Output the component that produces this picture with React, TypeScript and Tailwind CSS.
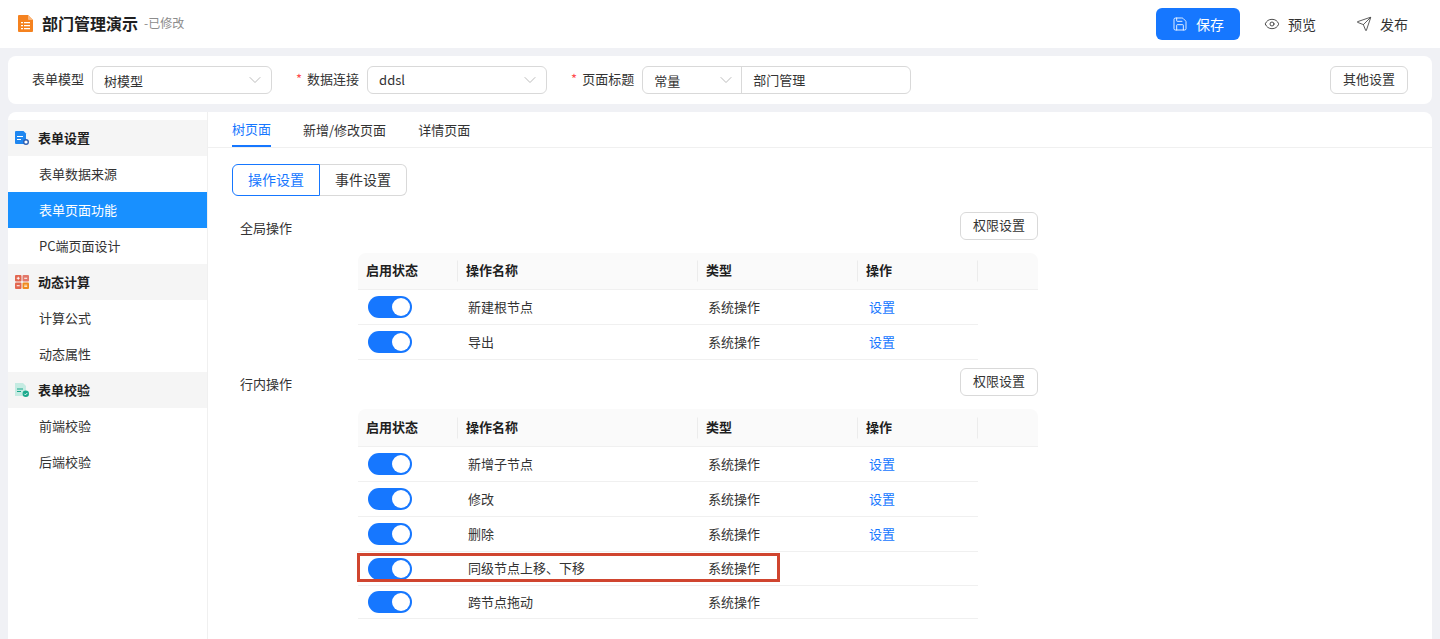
import { ChevronDown, Eye, Save, Send } from "lucide-react";

const FONT = "[font-family:'Noto_Sans_CJK_SC','Noto_Sans',sans-serif]";

function FileIcon() {
  return (
    <svg width="15" height="17" viewBox="0 0 15 17" className="mb-px shrink-0">
      <path d="M1 0h9l5 5v11a1 1 0 0 1-1 1H1a1 1 0 0 1-1-1V1a1 1 0 0 1 1-1z" fill="#f5821f" />
      <path d="M10 0l5 5h-4a1 1 0 0 1-1-1z" fill="#fbb77c" />
      <path d="M3 7h2v1.3H3zM6 7h6v1.3H6zM3 10h2v1.3H3zM6 10h6v1.3H6zM3 13h2v1.3H3zM6 13h6v1.3H6z" fill="#fff" />
    </svg>
  );
}

function FormIcon() {
  return (
    <svg width="14" height="14" viewBox="0 0 14 14" className="shrink-0">
      <path d="M1 0h7.5L11 2.5V13H1a1 1 0 0 1-1-1V1a1 1 0 0 1 1-1z" fill="#1f87f0" />
      <path d="M2 5h6v1H2zM2 8h4v1H2z" fill="#fff" />
      <circle cx="11" cy="11" r="2.3" fill="#fff" stroke="#2f5fb0" strokeWidth="1.4" />
    </svg>
  );
}

function CalcIcon() {
  return (
    <svg width="14" height="14" viewBox="0 0 14 14" className="shrink-0">
      <rect width="6.5" height="6.5" rx="1" fill="#e2664f" />
      <rect x="7.5" width="6.5" height="6.5" rx="1" fill="#e2786a" />
      <rect y="7.5" width="6.5" height="6.5" rx="1" fill="#e2664f" />
      <rect x="7.5" y="7.5" width="6.5" height="6.5" rx="1" fill="#f08a1d" />
      <path d="M1.7 2.8h3v.9h-3zM2.8 1.7h.9v3h-.9zM9.2 2.8h3v.9h-3zM1.7 10.3h3v.9h-3zM9.2 9.8h3v.8h-3zM9.2 11.2h3v.8h-3z" fill="#fff" />
    </svg>
  );
}

function CheckIcon() {
  return (
    <svg width="14" height="14" viewBox="0 0 14 14" className="shrink-0">
      <path d="M0 0h8l3 3v10H0z" fill="#c5ebe2" />
      <path d="M2 5.5h6v1H2zM2 8h4v1H2z" fill="#1aa98c" />
      <circle cx="10.8" cy="10.8" r="3.2" fill="#1aa98c" />
      <path d="M9.3 10.8l1.1 1.1 2-2" fill="none" stroke="#fff" strokeWidth="0.9" />
    </svg>
  );
}

function Toggle() {
  return (
    <span className="flex h-[22px] w-[44px] items-center justify-end rounded-full bg-[#1677ff] pr-[2px]">
      <span className="size-[18px] rounded-full bg-white" />
    </span>
  );
}

function Chevron() {
  return <ChevronDown size={20} strokeWidth={1.1} className="text-[#b5b5b5]" />;
}

function Req() {
  return <span className="mr-[5px] text-[13px] text-[#ff4d4f]">*</span>;
}

function SideHead({ icon, label }: { icon: React.ReactNode; label: string }) {
  return (
    <div className="flex h-9 items-center gap-[9px] bg-[#f5f5f5] pl-[7px] text-[13px] font-bold text-[#1f1f1f]">
      {icon}
      <span className="pb-px">{label}</span>
    </div>
  );
}

function SideItem({ label, active }: { label: string; active?: boolean }) {
  return (
    <div className={`flex h-9 items-center pb-px pl-[31px] text-[13px] ${active ? "bg-[#1890ff] text-white" : "text-[#333]"}`}>
      {label}
    </div>
  );
}

function OutlineBtn({ label }: { label: string }) {
  return (
    <button className="h-7 w-[78px] rounded-md border border-[#d9d9d9] bg-white pb-[2px] text-[13px] text-[#333]">
      {label}
    </button>
  );
}

function HeadCell({ label, className }: { label: string; className: string }) {
  return (
    <div className={`relative flex h-full items-center pb-[2px] text-[13px] font-bold text-[#1f1f1f] ${className}`}>
      {label}
      <span className="absolute right-0 top-1/2 h-[21px] w-px -translate-y-1/2 bg-[#ececec]" />
    </div>
  );
}

type RowData = { name: string; link?: boolean; marked?: boolean; h: string };

function Row({ name, link, marked, h }: RowData) {
  return (
    <div className={`relative flex w-[620px] items-center border-b border-[#f0f0f0] ${h}`}>
      <div className="w-[100px] pl-[10px]">
        <Toggle />
      </div>
      <div className="w-[240px] pb-px pl-[10px] text-[13px] text-[#333]">{name}</div>
      <div className="w-[160px] pb-px pl-[10px] text-[13px] text-[#333]">系统操作</div>
      <div className="w-[120px] pb-px pl-[11px] text-[13px] text-[#1677ff]">{link ? "设置" : ""}</div>
      {marked && <div className="absolute -left-px top-[1px] h-[29px] w-[423px] border-[3px] border-[#d0452f]" />}
    </div>
  );
}

function OpTable({ rows, headH }: { rows: RowData[]; headH: string }) {
  return (
    <div className="ml-[126px] w-[680px]">
      <div className={`flex items-center rounded-t-lg border-b border-[#f0f0f0] bg-[#fafafa] ${headH}`}>
        <HeadCell label="启用状态" className="w-[100px] pl-2" />
        <HeadCell label="操作名称" className="w-[240px] pl-2" />
        <HeadCell label="类型" className="w-[160px] pl-2" />
        <HeadCell label="操作" className="w-[120px] pl-2" />
      </div>
      {rows.map((r) => (
        <Row key={r.name} {...r} />
      ))}
    </div>
  );
}

function SectionHead({ label }: { label: string }) {
  return (
    <div className="flex w-[806px] items-center justify-between pl-2">
      <span className="pt-[4px] text-[13px] text-[#333]">{label}</span>
      <OutlineBtn label="权限设置" />
    </div>
  );
}

export default function App() {
  return (
    <div className={`flex h-[639px] flex-col overflow-hidden bg-[#f0f1f5] ${FONT}`}>
      <header className="flex h-12 shrink-0 items-center justify-between bg-white pl-[18px] pr-4">
        <div className="flex items-center">
          <FileIcon />
          <span className="ml-[9px] pb-[3px] text-base font-bold text-[#1f1f1f]">部门管理演示</span>
          <span className="ml-[6px] pb-[2px] text-xs text-[#8c8c8c]">-已修改</span>
        </div>
        <div className="flex items-center">
          <button className="flex h-8 w-[84px] items-center justify-center gap-2 rounded-md bg-[#1677ff] text-sm text-white">
            <Save size={16} strokeWidth={1.3} />
            保存
          </button>
          <button className="ml-[8px] flex h-8 w-[84px] items-center justify-center gap-2 text-sm text-[#333]">
            <Eye size={16} strokeWidth={1.3} />
            预览
          </button>
          <button className="ml-[8px] flex h-8 w-[84px] items-center justify-center gap-2 text-sm text-[#333]">
            <Send size={16} strokeWidth={1.2} />
            发布
          </button>
        </div>
      </header>

      <div className="mx-2 mt-2 flex h-12 shrink-0 items-center rounded-lg bg-white pl-6 pr-6 text-[13px] text-[#333]">
        <span className="pb-[2px]">表单模型</span>
        <div className="ml-2 flex h-7 w-[180px] items-center justify-between rounded-md border border-[#d9d9d9] pl-[11px] pr-[6px]">
          <span className="pt-px">树模型</span>
          <Chevron />
        </div>
        <span className="ml-6 pb-[2px]"><Req />数据连接</span>
        <div className="ml-2 flex h-7 w-[180px] items-center justify-between rounded-md border border-[#d9d9d9] pl-[11px] pr-[6px]">
          <span>ddsl</span>
          <Chevron />
        </div>
        <span className="ml-6 pb-[2px]"><Req />页面标题</span>
        <div className="ml-2 flex h-7 w-[269px] items-center rounded-md border border-[#d9d9d9]">
          <div className="flex h-full w-[99px] items-center justify-between border-r border-[#d9d9d9] pl-[11px] pr-[5px]">
            <span className="pt-px">常量</span>
            <Chevron />
          </div>
          <span className="pl-[11px]">部门管理</span>
        </div>
        <div className="ml-auto">
          <OutlineBtn label="其他设置" />
        </div>
      </div>

      <div className="mx-2 mt-2 flex min-h-0 flex-1 overflow-hidden rounded-t-lg bg-white">
        <aside className="w-[200px] shrink-0 border-r border-[#f0f0f0] pt-2">
          <SideHead icon={<FormIcon />} label="表单设置" />
          <SideItem label="表单数据来源" />
          <SideItem label="表单页面功能" active />
          <SideItem label="PC端页面设计" />
          <SideHead icon={<CalcIcon />} label="动态计算" />
          <SideItem label="计算公式" />
          <SideItem label="动态属性" />
          <SideHead icon={<CheckIcon />} label="表单校验" />
          <SideItem label="前端校验" />
          <SideItem label="后端校验" />
        </aside>

        <main className="min-w-0 flex-1">
          <div className="flex h-9 items-stretch gap-8 border-b border-[#f0f0f0] pl-6 text-[13px] text-[#333]">
            <span className="flex items-center border-b-2 border-[#1677ff] px-0 text-[#1677ff]">树页面</span>
            <span className="flex items-center">新增/修改页面</span>
            <span className="flex items-center">详情页面</span>
          </div>
          <div className="px-6 pt-4">
            <div className="flex text-sm">
              <span className="flex h-8 w-[88px] items-center justify-center rounded-l-md border border-[#1677ff] pb-[2px] text-[#1677ff]">操作设置</span>
              <span className="flex h-8 w-[87px] items-center justify-center rounded-r-md border border-l-0 border-[#d9d9d9] pb-[2px] text-[#333]">事件设置</span>
            </div>
            <div className="mt-4">
              <SectionHead label="全局操作" />
            </div>
            <div className="mt-[13px]">
              <OpTable
                headH="h-[37px]"
                rows={[
                  { name: "新建根节点", link: true, h: "h-[35px]" },
                  { name: "导出", link: true, h: "h-[35px]" },
                ]}
              />
            </div>
            <div className="mt-2">
              <SectionHead label="行内操作" />
            </div>
            <div className="mt-[13px]">
              <OpTable
                headH="h-[38px]"
                rows={[
                  { name: "新增子节点", link: true, h: "h-[35px]" },
                  { name: "修改", link: true, h: "h-[35px]" },
                  { name: "删除", link: true, h: "h-[35px]" },
                  { name: "同级节点上移、下移", marked: true, h: "h-[34px]" },
                  { name: "跨节点拖动", h: "h-[33px]" },
                ]}
              />
            </div>
          </div>
        </main>
      </div>
    </div>
  );
}
